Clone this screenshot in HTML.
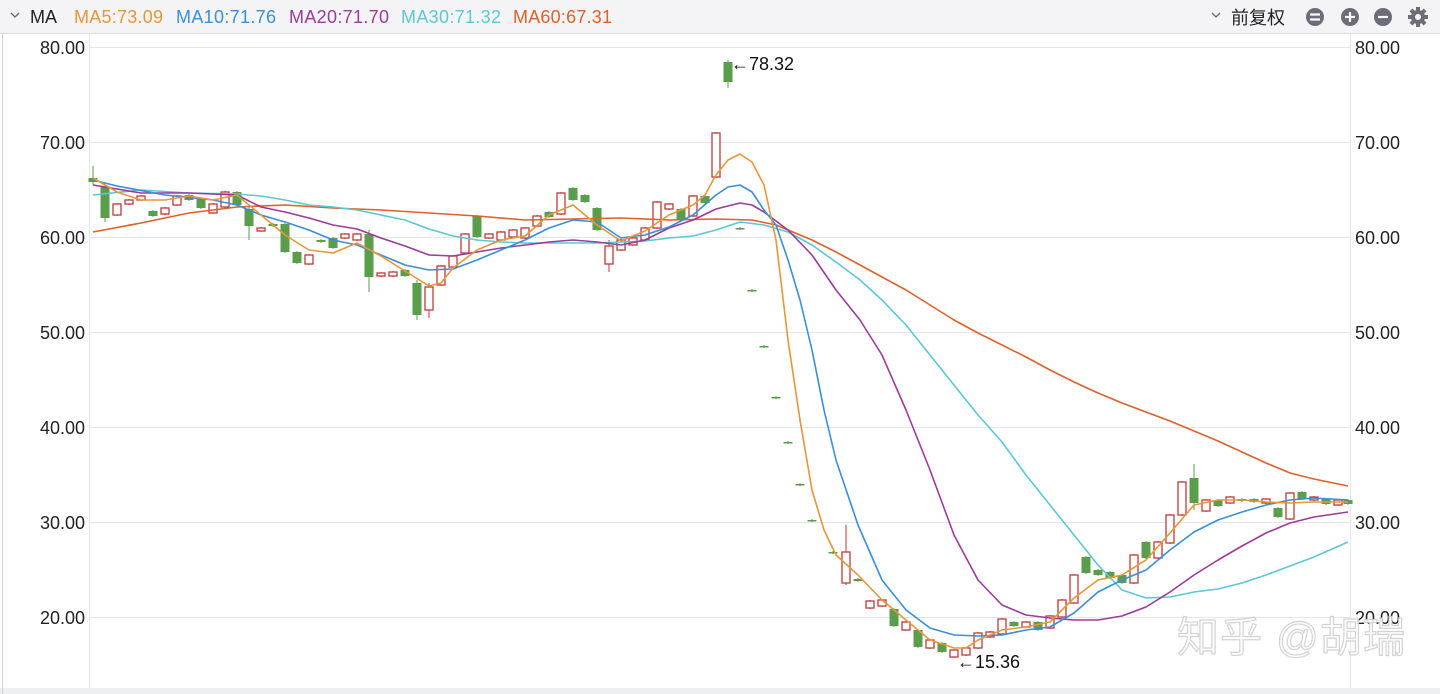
<!DOCTYPE html>
<html><head><meta charset="utf-8">
<style>
html,body{margin:0;padding:0;width:1440px;height:694px;overflow:hidden;background:#fff;font-family:"Liberation Sans","Noto Sans CJK SC",sans-serif}
</style></head><body>
<svg id="s" width="1440" height="694" xmlns="http://www.w3.org/2000/svg" style="position:absolute;left:0;top:0;font-family:'Liberation Sans','Noto Sans CJK SC',sans-serif">
<rect x="0" y="0" width="1440" height="33" fill="#f4f4f6"/>
<line x1="0" y1="33.5" x2="1440" y2="33.5" stroke="#dcdcdc"/>
<rect x="0" y="688" width="1440" height="6" fill="#eeeff1"/>
<line x1="2.5" y1="33" x2="2.5" y2="694" stroke="#d0d0d0"/>
<line x1="89.5" y1="34" x2="89.5" y2="688" stroke="#e8e8e8"/>
<line x1="1350.5" y1="34" x2="1350.5" y2="688" stroke="#e8e8e8"/>
<g stroke="#e6e6e6">
<line x1="90" y1="47.5" x2="1350" y2="47.5"/><line x1="90" y1="142.5" x2="1350" y2="142.5"/><line x1="90" y1="237.5" x2="1350" y2="237.5"/><line x1="90" y1="332.5" x2="1350" y2="332.5"/><line x1="90" y1="427.5" x2="1350" y2="427.5"/><line x1="90" y1="522.5" x2="1350" y2="522.5"/><line x1="90" y1="617.5" x2="1350" y2="617.5"/>
</g>
<path d="M11 13 l4 4 l4 -4" fill="none" stroke="#666" stroke-width="1.3"/>
<text x="30" y="23" font-size="18" fill="#222">MA</text>
<text x="74" y="23" font-size="18" fill="#e8963a" textLength="89">MA5:73.09</text>
<text x="176" y="23" font-size="18" fill="#3b8ed8" textLength="100">MA10:71.76</text>
<text x="289" y="23" font-size="18" fill="#9b3b9a" textLength="100">MA20:71.70</text>
<text x="401" y="23" font-size="18" fill="#5ac8d8" textLength="100">MA30:71.32</text>
<text x="513" y="23" font-size="18" fill="#e0602a" textLength="99">MA60:67.31</text>
<path d="M1212 13 l4 4 l4 -4" fill="none" stroke="#666" stroke-width="1.3"/>
<text x="1231" y="24" font-size="18" fill="#222">前复权</text>
<g fill="#6b6e78"><circle cx="1315" cy="17" r="9"/><circle cx="1350" cy="17" r="9"/><circle cx="1383" cy="17" r="9"/></g>
<g stroke="#fff" stroke-width="2.2"><line x1="1310" y1="14.5" x2="1320" y2="14.5"/><line x1="1310" y1="19.5" x2="1320" y2="19.5"/><line x1="1345" y1="17" x2="1355" y2="17"/><line x1="1350" y1="12" x2="1350" y2="22"/><line x1="1378" y1="17" x2="1388" y2="17"/></g>
<g transform="translate(1418,17)" fill="#6b6e78"><circle r="7"/><g><rect x="-2" y="-10" width="4" height="20"/><rect x="-10" y="-2" width="20" height="4"/></g><g transform="rotate(45)"><rect x="-2" y="-10" width="4" height="20"/><rect x="-10" y="-2" width="20" height="4"/></g><circle r="3" fill="#f4f4f6"/></g>
<g font-size="18" fill="#222" text-anchor="end">
<text x="85" y="54">80.00</text><text x="85" y="149">70.00</text><text x="85" y="244">60.00</text><text x="85" y="339">50.00</text><text x="85" y="434">40.00</text><text x="85" y="529">30.00</text><text x="85" y="624">20.00</text></g>
<g font-size="18" fill="#222">
<text x="1355" y="54">80.00</text><text x="1355" y="149">70.00</text><text x="1355" y="244">60.00</text><text x="1355" y="339">50.00</text><text x="1355" y="434">40.00</text><text x="1355" y="529">30.00</text><text x="1355" y="624">20.00</text></g>
<g id="c"></g>
<g fill="none" stroke-width="1.6" stroke-linejoin="round">
<polyline stroke="#e0602a" points="93,232 141,223 189,213 237,207 285,205 333,208 381,210 429,213 477,216 525,220 573,219 621,218 669,220 716,219 752,220 776,225 812,240 836,252 860,265 882,277 906,290 930,305 954,320 978,333 1002,345 1026,357 1050,370 1074,382 1098,393 1122,403 1146,412 1170,421 1194,431 1218,441 1242,452 1266,463 1290,473 1314,479 1348,486"/>
<polyline stroke="#5ac8d8" points="93,195 141,190 189,193 237,194 261,196 285,200 309,205 333,207 357,210 381,215 405,220 429,229 453,236 477,240 501,242 525,243 549,243 573,243 597,243 621,242 645,241 669,238 693,236 716,230 740,222 764,225 788,232 812,245 836,262 860,280 882,300 906,325 930,355 954,385 978,415 1002,442 1026,475 1050,505 1074,535 1098,565 1122,590 1146,598 1170,597 1194,592 1218,589 1242,583 1266,575 1290,566 1314,557 1348,542"/>
<polyline stroke="#9b3b9a" points="93,185 141,193 189,193 237,195 261,207 285,212 309,218 333,225 357,229 381,238 405,246 429,255 453,256 477,252 501,248 525,245 549,242 573,240 597,242 621,245 645,240 669,228 693,220 716,209 740,203 752,205 764,212 788,230 812,255 836,290 860,320 882,355 906,410 930,470 954,535 978,580 1002,605 1026,615 1050,618 1074,620 1098,620 1122,616 1146,607 1170,592 1194,575 1218,560 1242,546 1266,533 1290,523 1314,517 1348,512"/>
<polyline stroke="#3b8ed8" points="93,180 117,186 165,195 213,200 237,205 261,215 285,222 309,230 333,240 357,245 381,255 405,265 429,270 453,269 477,260 501,250 525,240 549,228 573,220 597,222 621,238 645,235 669,227 693,215 716,195 728,187 740,185 752,192 764,210 776,225 788,260 800,300 812,350 824,410 836,460 858,525 882,580 906,610 930,628 954,635 978,636 1002,635 1026,630 1050,627 1074,613 1098,592 1122,580 1146,570 1170,550 1194,532 1218,520 1242,512 1266,505 1290,500 1314,498 1348,500"/>
<polyline stroke="#e8963a" points="93,178 117,192 141,200 165,200 189,196 213,200 237,195 261,215 285,235 309,250 333,253 357,243 381,256 405,271 429,286 441,283 453,268 477,250 501,240 525,236 549,215 573,205 597,225 621,241 645,231 669,215 693,205 705,195 716,175 728,160 740,154 752,162 764,185 776,240 788,340 800,420 812,490 824,530 836,555 858,575 882,600 906,620 930,640 954,648 966,648 978,640 1002,630 1026,627 1050,622 1074,598 1098,580 1122,575 1146,560 1170,533 1194,505 1218,500 1242,500 1266,502 1290,503 1314,502 1348,502"/>
</g>
<text x="731" y="70" font-size="18" fill="#111">←78.32</text>
<text x="957" y="668" font-size="18" fill="#111">←15.36</text>
<text x="1177" y="652" font-size="42" fill="#fff" stroke="#cfcfcf" stroke-width="1.2" textLength="228" opacity="0.9">知乎 @胡瑞</text>
</svg>
<script>
var d=[[93,'g',178,182,166,185],[105,'g',186,218,183,222],[117,'r',204,215],[129,'r',200,204],[141,'r',196,200],[153,'g',211,216],[165,'r',208,214],[177,'r',196,205],[189,'g',195,200],[201,'g',199,208],[213,'r',204,213],[225,'r',192,207],[237,'g',192,205],[249,'g',209,226,205,240],[261,'r',228,231],[273,'g',224,226],[285,'g',224,252],[297,'g',252,263],[309,'r',255,264],[321,'g',240,242],[333,'g',238,248],[345,'r',234,238],[357,'r',234,240],[369,'g',234,277,230,292],[381,'r',273,276],[393,'r',272,276],[405,'g',270,276],[417,'g',283,315,280,320],[429,'r',287,310,283,318],[441,'r',266,285],[453,'r',256,267],[465,'r',234,253],[477,'g',216,237],[489,'r',234,238],[501,'r',232,240],[513,'r',230,237],[525,'r',228,238],[537,'r',216,226],[549,'g',212,217],[561,'r',193,214],[573,'g',188,200],[585,'g',195,202],[597,'g',208,230],[609,'r',246,264,240,272],[621,'r',240,250],[633,'r',238,245],[645,'r',228,240],[657,'r',202,228],[669,'r',204,209],[681,'g',209,219],[693,'r',196,216],[705,'g',196,203],[716,'r',133,177],[728,'g',62,82,60,88],[740,'g',228,229],[752,'g',290,291],[764,'g',346,347],[776,'g',397,398],[788,'g',442,443],[800,'g',484,485],[812,'g',520,521],[833,'g',552,553],[846,'r',552,583,525,585],[858,'g',579,581],[870,'r',601,608],[882,'r',600,606],[894,'g',609,626],[906,'r',622,630],[918,'g',630,647],[930,'r',640,648],[942,'g',643,652],[954,'r',650,657],[966,'r',648,655],[978,'r',633,648],[990,'r',632,637],[1002,'r',619,634],[1014,'g',622,626],[1026,'r',622,627],[1038,'g',622,630],[1050,'r',616,628],[1062,'r',600,617],[1074,'r',575,603],[1086,'g',557,573],[1098,'g',570,575],[1110,'g',572,578],[1122,'g',575,583],[1134,'r',555,583],[1146,'g',542,558],[1158,'r',542,558],[1170,'r',515,543],[1182,'r',482,515],[1194,'g',478,503,464,510],[1206,'r',500,511],[1218,'g',500,506],[1230,'r',497,503],[1242,'g',499,501],[1254,'g',499,502],[1266,'r',499,503],[1278,'g',508,517],[1290,'r',493,519],[1302,'g',492,499],[1314,'r',497,500],[1326,'g',499,504],[1338,'r',500,505],[1348,'g',500,504]];
var h='';d.forEach(function(c){var x=c[0],t=c[2],b=c[3],hi=c[4]||t-1,lo=c[5]||b+1,col=c[1]=='g'?'#5a9e4b':'#c03a3a';
h+='<line x1="'+x+'" y1="'+hi+'" x2="'+x+'" y2="'+lo+'" stroke="'+col+'" stroke-width="1"/>';
if(c[1]=='g')h+='<rect x="'+(x-4.5)+'" y="'+t+'" width="9" height="'+Math.max(b-t,1.5)+'" fill="'+col+'"/>';
else h+='<rect x="'+(x-4)+'" y="'+t+'" width="8" height="'+Math.max(b-t,1.5)+'" fill="#fff" stroke="'+col+'" stroke-width="1.3"/>';});
document.getElementById('c').innerHTML=h;
</script>
</body></html>
